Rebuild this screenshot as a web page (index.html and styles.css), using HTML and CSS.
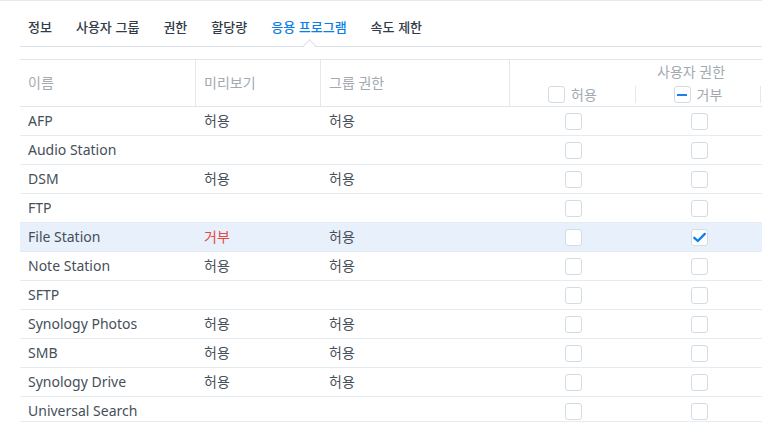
FILE: index.html
```html
<!DOCTYPE html>
<html lang="ko">
<head>
  <meta charset="UTF-8">
  <title>응용 프로그램 권한</title>
  <link rel="stylesheet" href="styles.css">
</head>
<body>
  <nav class="tabs">
    <a class="tab">정보</a>
    <a class="tab">사용자 그룹</a>
    <a class="tab">권한</a>
    <a class="tab">할당량</a>
    <a class="tab active">응용 프로그램<span class="caret"></span></a>
    <a class="tab">속도 제한</a>
  </nav>

  <div class="grid">
    <div class="grid-head">
      <div class="hcell">이름</div>
      <div class="hcell">미리보기</div>
      <div class="hcell">그룹 권한</div>
      <div class="hgroup">
        <div class="hgroup-title">사용자 권한</div>
        <div class="hgroup-sub">
          <label class="hsub"><span class="cb"></span>허용</label>
          <label class="hsub"><span class="cb mixed"></span>거부</label>
          <span class="hsub-edge"></span>
        </div>
      </div>
    </div>

    <div class="grid-body">
      <div class="row"><div class="cell">AFP</div><div class="cell">허용</div><div class="cell">허용</div><div class="cell center"><span class="cb"></span></div><div class="cell center"><span class="cb"></span></div></div>
      <div class="row"><div class="cell">Audio Station</div><div class="cell"></div><div class="cell"></div><div class="cell center"><span class="cb"></span></div><div class="cell center"><span class="cb"></span></div></div>
      <div class="row"><div class="cell">DSM</div><div class="cell">허용</div><div class="cell">허용</div><div class="cell center"><span class="cb"></span></div><div class="cell center"><span class="cb"></span></div></div>
      <div class="row"><div class="cell">FTP</div><div class="cell"></div><div class="cell"></div><div class="cell center"><span class="cb"></span></div><div class="cell center"><span class="cb"></span></div></div>
      <div class="row selected"><div class="cell">File Station</div><div class="cell deny">거부</div><div class="cell">허용</div><div class="cell center"><span class="cb"></span></div><div class="cell center"><span class="cb checked"><svg viewBox="0 0 15 15" width="15" height="15"><path d="M2.3 7.8 L5.8 11 L12.8 3.9" fill="none" stroke="#0b7ee8" stroke-width="2.3" stroke-linecap="round" stroke-linejoin="round"/></svg></span></div></div>
      <div class="row"><div class="cell">Note Station</div><div class="cell">허용</div><div class="cell">허용</div><div class="cell center"><span class="cb"></span></div><div class="cell center"><span class="cb"></span></div></div>
      <div class="row"><div class="cell">SFTP</div><div class="cell"></div><div class="cell"></div><div class="cell center"><span class="cb"></span></div><div class="cell center"><span class="cb"></span></div></div>
      <div class="row"><div class="cell">Synology Photos</div><div class="cell">허용</div><div class="cell">허용</div><div class="cell center"><span class="cb"></span></div><div class="cell center"><span class="cb"></span></div></div>
      <div class="row"><div class="cell">SMB</div><div class="cell">허용</div><div class="cell">허용</div><div class="cell center"><span class="cb"></span></div><div class="cell center"><span class="cb"></span></div></div>
      <div class="row"><div class="cell">Synology Drive</div><div class="cell">허용</div><div class="cell">허용</div><div class="cell center"><span class="cb"></span></div><div class="cell center"><span class="cb"></span></div></div>
      <div class="row"><div class="cell">Universal Search</div><div class="cell"></div><div class="cell"></div><div class="cell center"><span class="cb"></span></div><div class="cell center"><span class="cb"></span></div></div>
    </div>
  </div>
</body>
</html>
```

FILE: styles.css
```css
body { margin: 0; border-top: 1px solid #e6eaef; background: #fff; font-family: "Noto Sans", "Noto Sans CJK KR", sans-serif; color: #464f59; }

.tabs { display: flex; gap: 24px; height: 45px; margin-left: 20px; padding-left: 8px; border-bottom: 1px solid #d9e0e7; }
.tab { position: relative; padding-top: 17px; line-height: 18px; font-size: 13px; font-weight: 500; color: #323c46; font-family: "Noto Sans CJK KR", sans-serif; }
.tab.active { color: #0b7ee8; }
.caret { position: absolute; left: 50%; bottom: -4px; width: 8px; height: 8px; margin-left: -4px; background: #fff; border-top: 1px solid #d9e0e7; border-left: 1px solid #d9e0e7; transform: rotate(45deg); }

.grid { margin: 12px 0 0 20px; border-top: 1px solid #e1e6ec; font-size: 14px; line-height: 16px; }
.grid-head { display: grid; grid-template-columns: 176px 125px 189px 1fr; height: 46px; border-bottom: 1px solid #e1e6ec; }
.hcell { display: flex; align-items: center; padding-left: 8px; color: #a3a9b0; border-right: 1px solid #e4e9ee; }
.hgroup { padding-top: 4px; color: #a3a9b0; }
.hgroup-title { padding-left: 147px; }
.hgroup-sub { display: grid; grid-template-columns: 126px 125px 1fr; margin-top: 6px; height: 16px; }
.hsub { display: flex; align-items: center; justify-content: center; gap: 6px; border-right: 1px solid #e4e9ee; }
.hsub-edge { display: block; }

.grid-body { height: 314px; overflow: hidden; border-bottom: 1px solid #e6ebf0; }
.row { display: grid; grid-template-columns: 176px 125px 189px 126px 126px; height: 28px; border-bottom: 1px solid #e6ebf0; }
.row.selected { background: #e7f0fb; }
.cell { display: flex; align-items: center; padding-left: 8px; }
.cell.center { justify-content: center; padding: 0 0 0 1px; }
.deny { color: #e5483f; }

.cb { display: inline-flex; align-items: center; justify-content: center; box-sizing: border-box; width: 17px; height: 17px; border: 1px solid #d3dbe3; border-radius: 3px; background: #fff; }
.cb.mixed::after { content: ""; width: 10px; height: 2px; background: #1a7fe6; }
.cb svg { display: block; }
```
